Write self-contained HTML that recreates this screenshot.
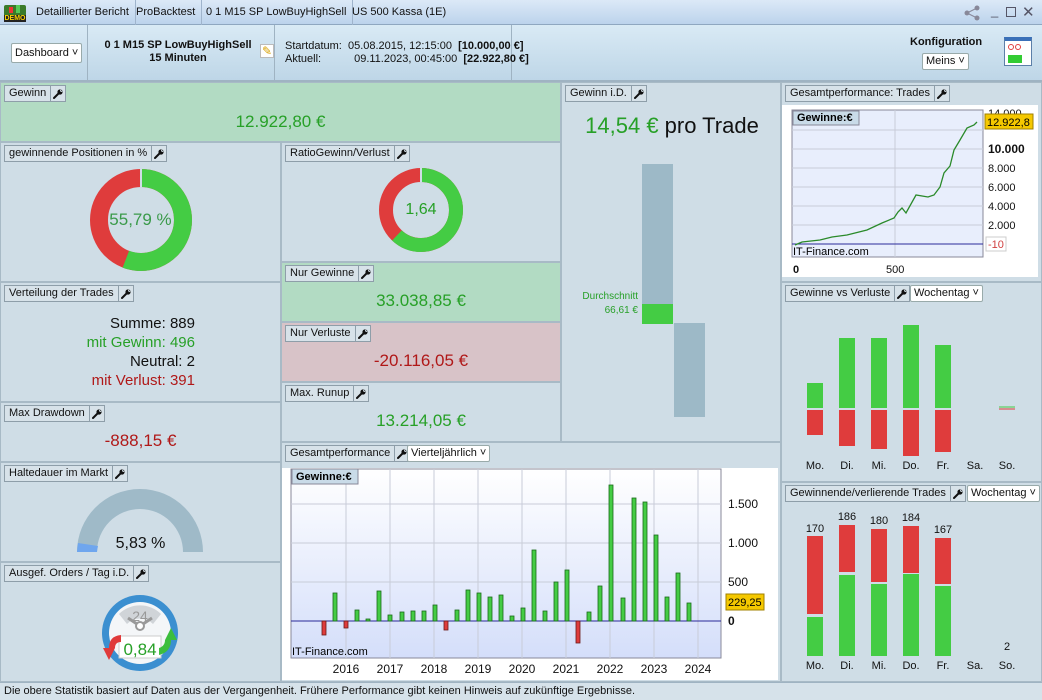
<!DOCTYPE html>
<html><head><meta charset="utf-8"><style>
*{margin:0;padding:0;box-sizing:border-box}
body{width:1042px;height:700px;overflow:hidden;font-family:"Liberation Sans",Arial,sans-serif;font-size:11px;color:#111;background:#cfdde6;position:relative}
.a{position:absolute}
.tb{left:0;top:0;width:1042px;height:25px;background:linear-gradient(#dce9f7,#bcd3ec);border-bottom:1px solid #8fa7c0}
.tab{top:0;height:25px;line-height:25px;padding:0 6px;border-right:1px solid #9fb4cc;font-size:11px}
.hd{left:0;top:25px;width:1042px;height:57px;background:linear-gradient(#d9eaf5,#bed6e7);border-bottom:2px solid #9fb3c2}
.p{border:1px solid #a8bac6;background:#cfdde6}
.lbl{position:absolute;left:3px;top:2px;height:17px;line-height:15px;border:1px solid #8e9ea9;background:#d7e2e9;font-size:11px;white-space:nowrap;display:flex}
.lbl span{padding:0 4px}
.lbl i{border-left:1px solid #8e9ea9;width:15px;display:flex;align-items:center;justify-content:center}
.sel{position:absolute;height:17px;line-height:15px;border:1px solid #9aa;background:#fff;border-radius:2px;padding:0 3px;font-size:11px}
.big{position:absolute;left:0;width:100%;text-align:center;font-size:17px}
.g{color:#27a027}.r{color:#b01818}
</style></head><body>
<svg width="0" height="0" style="position:absolute"><defs><symbol id="w" viewBox="0 0 10 10"><path d="M1 9 L6 4" stroke="#111" stroke-width="2" stroke-linecap="round"/><circle cx="7" cy="3" r="2.6" fill="#111"/><path d="M7.3 0.5 L9.5 2.7 L8 3 L7 2Z" fill="#d7e2e9"/></symbol></defs></svg>
<div class="a tb"></div>
<div class="a" style="left:4px;top:5px;width:22px;height:17px;background:#3a7a2a;border-radius:2px"><div style="position:absolute;left:0;bottom:0;width:22px;height:7px;background:#222;color:#f6d200;font-size:7px;font-weight:bold;line-height:7px;text-align:center">DEMO</div><div style="position:absolute;left:5px;top:2px;width:4px;height:6px;background:#e33"></div><div style="position:absolute;left:12px;top:0;width:4px;height:8px;background:#5c5"></div></div>
<div class="a tab" style="left:30px">Detaillierter Bericht</div>
<div class="a tab" style="left:130px">ProBacktest</div>
<div class="a tab" style="left:200px">0 1 M15 SP LowBuyHighSell</div>
<div class="a tab" style="left:346px;border:none">US 500 Kassa (1E)</div>
<svg class="a" style="left:964px;top:5px" width="18" height="16"><circle cx="3" cy="8" r="2.5" fill="#889"/><circle cx="13" cy="3" r="2.5" fill="#889"/><circle cx="13" cy="13" r="2.5" fill="#889"/><path d="M3 8 L13 3 M3 8 L13 13" stroke="#889"/></svg>
<div class="a" style="left:991px;top:3px;font-size:13px;color:#556">_</div>
<div class="a" style="left:1006px;top:7px;width:10px;height:10px;border:1.5px solid #556"></div>
<div class="a" style="left:1022px;top:3px;font-size:15px;color:#556">&#10005;</div>

<div class="a hd"></div>
<div class="a" style="left:87px;top:25px;width:1px;height:56px;background:#9fb3c2"></div>
<div class="a" style="left:274px;top:25px;width:1px;height:56px;background:#9fb3c2"></div>
<div class="a" style="left:511px;top:25px;width:1px;height:56px;background:#9fb3c2"></div>
<div class="sel" style="left:11px;top:43px;height:20px;line-height:18px">Dashboard &#709;</div>
<div class="a" style="left:100px;top:39px;width:156px;text-align:center;font-weight:bold;font-size:11px;line-height:13px">0 1 M15 SP LowBuyHighSell<br>15 Minuten</div>
<div class="a" style="left:260px;top:44px;width:14px;height:14px;background:#fff;border:1px solid #bbb;color:#d8a000;font-size:12px;line-height:12px;text-align:center">&#9998;</div>
<div class="a" style="left:285px;top:40px;line-height:13px;font-size:11px">Startdatum:&nbsp; 05.08.2015, 12:15:00 &nbsp;<b>[10.000,00 €]</b><br>Aktuell:<span style="display:inline-block;width:33px"></span>09.11.2023, 00:45:00 &nbsp;<b>[22.922,80 €]</b></div>
<div class="a" style="left:910px;top:36px;font-weight:bold;font-size:11px">Konfiguration</div>
<div class="sel" style="left:922px;top:53px">Meins &#709;</div>
<div class="a" style="left:1004px;top:37px;width:28px;height:29px;border:1px solid #5c7fa8;background:#fff;border-top:4px solid #3a70b8"><div style="position:absolute;left:3px;top:3px;width:6px;height:6px;border:1.5px solid #e04040;border-radius:50%"></div><div style="position:absolute;left:10px;top:3px;width:6px;height:6px;border:1.5px solid #e04040;border-radius:50%"></div><div style="position:absolute;left:3px;bottom:2px;width:14px;height:8px;background:#3c3"></div></div>

<!-- col1 -->
<div class="a p" style="left:0;top:82px;width:561px;height:60px;background:#b2dbc3"><div class="lbl"><span>Gewinn</span><i><svg width="10" height="10"><use href="#w"/></svg></i></div><div class="big g" style="top:29px">12.922,80 €</div></div>
<div class="a p" style="left:0;top:142px;width:281px;height:140px"><div class="lbl"><span>gewinnende Positionen in %</span><i><svg width="10" height="10"><use href="#w"/></svg></i></div></div>
<svg class="a" style="left:0;top:142px" width="281" height="140"><circle cx="141" cy="78" r="42" fill="none" stroke="#df3c3c" stroke-width="18"/><circle cx="141" cy="78" r="42" fill="none" stroke="#44cc44" stroke-width="18" stroke-dasharray="147.2 300" transform="rotate(-90 141 78)"/><line x1="141" y1="27" x2="141" y2="45" stroke="#cfdde6" stroke-width="2"/></svg>
<div class="big" style="left:0;width:281px;top:210px;color:#3a9a4a;font-size:17px">55,79 %</div>
<div class="a p" style="left:0;top:282px;width:281px;height:120px"><div class="lbl"><span>Verteilung der Trades</span><i><svg width="10" height="10"><use href="#w"/></svg></i></div>
<div class="a" style="left:0;width:194px;top:31px;text-align:right;font-size:15px;line-height:19px">Summe: 889<br><span class="g">mit Gewinn: 496</span><br>Neutral: 2<br><span class="r">mit Verlust: 391</span></div></div>
<div class="a p" style="left:0;top:402px;width:281px;height:60px"><div class="lbl"><span>Max Drawdown</span><i><svg width="10" height="10"><use href="#w"/></svg></i></div><div class="big r" style="top:28px">-888,15 €</div></div>
<div class="a p" style="left:0;top:462px;width:281px;height:100px"><div class="lbl"><span>Haltedauer im Markt</span><i><svg width="10" height="10"><use href="#w"/></svg></i></div></div>
<svg class="a" style="left:0;top:462px" width="281" height="100"><path d="M77 90 A63 63 0 0 1 203 90 L183 90 A43 43 0 0 0 97 90 Z" fill="#9fbac8"/><path d="M77 90 A63 63 0 0 1 78 81 L98 84 A43 43 0 0 0 97 90 Z" fill="#6fa6ee"/></svg>
<div class="big" style="left:0;width:281px;top:535px;font-size:16px">5,83 %</div>
<div class="a p" style="left:0;top:562px;width:281px;height:120px"><div class="lbl"><span>Ausgef. Orders / Tag i.D.</span><i><svg width="10" height="10"><use href="#w"/></svg></i></div></div>
<svg class="a" style="left:95px;top:590px" width="90" height="90"><circle cx="45" cy="43" r="38" fill="#3b8fd0"/><circle cx="45" cy="43" r="31" fill="#f4f6f8"/><path d="M24 24 A30 30 0 0 1 66 24 L58 34 A18 18 0 0 0 32 34Z" fill="#d0d4d8"/><text x="45" y="31" font-size="14" fill="#999" text-anchor="middle" font-family="Liberation Sans">24</text><line x1="45" y1="36" x2="33" y2="28" stroke="#999" stroke-width="3"/><line x1="45" y1="36" x2="57" y2="28" stroke="#999" stroke-width="3"/><circle cx="45" cy="36" r="4" fill="#fff" stroke="#999" stroke-width="2"/><rect x="24" y="46" width="42" height="22" fill="#fff" stroke="#ccc"/><path d="M8 58 L20 58 L14 70Z M14 58 Q14 46 26 45 L26 52 Q20 52 20 58Z" fill="#e03a3a"/><path d="M70 50 L82 50 L76 38Z M76 50 Q76 62 64 65 L64 58 Q70 56 70 50Z" fill="#3cbe3c"/></svg>
<div class="a g" style="left:95px;width:90px;top:640px;text-align:center;font-size:17px">0,84</div>

<!-- col2 -->
<div class="a p" style="left:281px;top:142px;width:280px;height:120px"><div class="lbl"><span>RatioGewinn/Verlust</span><i><svg width="10" height="10"><use href="#w"/></svg></i></div></div>
<svg class="a" style="left:281px;top:142px" width="280" height="120"><circle cx="140" cy="68" r="35" fill="none" stroke="#df3c3c" stroke-width="14"/><circle cx="140" cy="68" r="35" fill="none" stroke="#44cc44" stroke-width="14" stroke-dasharray="136.3 300" transform="rotate(-90 140 68)"/><line x1="140" y1="26" x2="140" y2="40" stroke="#cfdde6" stroke-width="2"/></svg>
<div class="big g" style="left:281px;width:280px;top:201px;font-size:16px">1,64</div>
<div class="a p" style="left:281px;top:262px;width:280px;height:60px;background:#b2dbc3"><div class="lbl"><span>Nur Gewinne</span><i><svg width="10" height="10"><use href="#w"/></svg></i></div><div class="big g" style="top:28px">33.038,85 €</div></div>
<div class="a p" style="left:281px;top:322px;width:280px;height:60px;background:#d8c3c8"><div class="lbl"><span>Nur Verluste</span><i><svg width="10" height="10"><use href="#w"/></svg></i></div><div class="big r" style="top:28px">-20.116,05 €</div></div>
<div class="a p" style="left:281px;top:382px;width:280px;height:60px"><div class="lbl"><span>Max. Runup</span><i><svg width="10" height="10"><use href="#w"/></svg></i></div><div class="big g" style="top:28px">13.214,05 €</div></div>
<div class="a p" style="left:281px;top:442px;width:500px;height:240px"><div class="lbl"><span>Gesamtperformance</span><i><svg width="10" height="10"><use href="#w"/></svg></i></div><div class="sel" style="left:125px;top:2px">Vierteljährlich &#709;</div></div>
<svg class="a" style="left:282px;top:468px" width="496" height="212" font-family="Liberation Sans" font-size="12">
<defs><linearGradient id="gg" x1="0" y1="0" x2="0" y2="1"><stop offset="0" stop-color="#fff"/><stop offset="1" stop-color="#d4defa"/></linearGradient></defs>
<rect x="0" y="0" width="496" height="212" fill="#fff"/>
<rect x="9" y="1" width="430" height="189" fill="url(#gg)" stroke="#889"/>
<g stroke="#c8ccd8"><line x1="64" y1="1" x2="64" y2="190"/><line x1="108" y1="1" x2="108" y2="190"/><line x1="152" y1="1" x2="152" y2="190"/><line x1="196" y1="1" x2="196" y2="190"/><line x1="240" y1="1" x2="240" y2="190"/><line x1="284" y1="1" x2="284" y2="190"/><line x1="328" y1="1" x2="328" y2="190"/><line x1="372" y1="1" x2="372" y2="190"/><line x1="416" y1="1" x2="416" y2="190"/><line x1="9" y1="36" x2="439" y2="36"/><line x1="9" y1="75" x2="439" y2="75"/><line x1="9" y1="114" x2="439" y2="114"/></g>
<line x1="9" y1="153" x2="439" y2="153" stroke="#2a2a9a"/>
<g stroke="#1a6a1a" stroke-width="0.8" fill="#44cc44">
<rect x="51" y="125" width="4" height="28"/><rect x="73" y="142" width="4" height="11"/><rect x="84" y="151" width="4" height="2"/><rect x="95" y="123" width="4" height="30"/><rect x="106" y="147" width="4" height="6"/><rect x="118" y="144" width="4" height="9"/><rect x="129" y="143" width="4" height="10"/><rect x="140" y="143" width="4" height="10"/><rect x="151" y="137" width="4" height="16"/><rect x="173" y="142" width="4" height="11"/><rect x="184" y="122" width="4" height="31"/><rect x="195" y="125" width="4" height="28"/><rect x="206" y="129" width="4" height="24"/><rect x="217" y="127" width="4" height="26"/><rect x="228" y="148" width="4" height="5"/><rect x="239" y="140" width="4" height="13"/><rect x="250" y="82" width="4" height="71"/><rect x="261" y="143" width="4" height="10"/><rect x="272" y="114" width="4" height="39"/><rect x="283" y="102" width="4" height="51"/><rect x="305" y="144" width="4" height="9"/><rect x="316" y="118" width="4" height="35"/><rect x="327" y="17" width="4" height="136"/><rect x="339" y="130" width="4" height="23"/><rect x="350" y="30" width="4" height="123"/><rect x="361" y="34" width="4" height="119"/><rect x="372" y="67" width="4" height="86"/><rect x="383" y="129" width="4" height="24"/><rect x="394" y="105" width="4" height="48"/><rect x="405" y="135" width="4" height="18"/></g>
<g stroke="#6a1a1a" stroke-width="0.8" fill="#df3c3c"><rect x="40" y="153" width="4" height="14"/><rect x="62" y="153" width="4" height="7"/><rect x="162" y="153" width="4" height="9"/><rect x="294" y="153" width="4" height="22"/></g>
<rect x="10" y="1" width="66" height="15" fill="#c9dbe8" stroke="#889"/><text x="14" y="12" font-weight="bold" font-size="11">Gewinne:€</text>
<text x="10" y="187" font-size="11">IT-Finance.com</text>
<g fill="#111"><text x="446" y="40">1.500</text><text x="446" y="79">1.000</text><text x="446" y="118">500</text><text x="446" y="157" font-weight="bold">0</text></g>
<g fill="#111" text-anchor="middle"><text x="64" y="205">2016</text><text x="108" y="205">2017</text><text x="152" y="205">2018</text><text x="196" y="205">2019</text><text x="240" y="205">2020</text><text x="284" y="205">2021</text><text x="328" y="205">2022</text><text x="372" y="205">2023</text><text x="416" y="205">2024</text></g>
<rect x="444" y="126" width="38" height="16" fill="#f5c800" stroke="#a08000"/><text x="446" y="138" font-size="11">229,25</text>
</svg>

<!-- col3 -->
<div class="a p" style="left:561px;top:82px;width:220px;height:360px"><div class="lbl"><span>Gewinn i.D.</span><i><svg width="10" height="10"><use href="#w"/></svg></i></div>
<div class="a" style="left:0;width:220px;top:30px;text-align:center;font-size:22px"><span class="g">14,54 €</span> pro Trade</div>
<div class="a" style="left:80px;top:81px;width:31px;height:140px;background:#9db9c7"></div>
<div class="a" style="left:80px;top:221px;width:31px;height:20px;background:#44cc44"></div>
<div class="a" style="left:112px;top:240px;width:31px;height:94px;background:#9db9c7"></div>
<div class="a g" style="left:0;width:76px;top:207px;text-align:right;font-size:10px;line-height:14px">Durchschnitt<br>66,61 €</div></div>

<!-- col4 -->
<div class="a p" style="left:781px;top:82px;width:261px;height:200px"><div class="lbl"><span>Gesamtperformance: Trades</span><i><svg width="10" height="10"><use href="#w"/></svg></i></div></div>
<svg class="a" style="left:782px;top:105px" width="256" height="172" font-family="Liberation Sans" font-size="11">
<rect x="0" y="0" width="256" height="172" fill="#fff"/>
<rect x="10" y="5" width="191" height="147" fill="#e8eefc" stroke="#889"/>
<g stroke="#c8ccd8"><line x1="113" y1="5" x2="113" y2="152"/><line x1="10" y1="25" x2="201" y2="25"/><line x1="10" y1="44" x2="201" y2="44"/><line x1="10" y1="63" x2="201" y2="63"/><line x1="10" y1="82" x2="201" y2="82"/><line x1="10" y1="101" x2="201" y2="101"/><line x1="10" y1="120" x2="201" y2="120"/></g>
<line x1="10" y1="139" x2="201" y2="139" stroke="#2a2a9a"/>
<polyline fill="none" stroke="#2a8a2a" stroke-width="1.3" points="13,140 20,137 38,135 50,132 65,130 85,125 100,118 112,113 116,107 120,103 124,108 134,90 146,92 152,90 158,82 162,68 168,61 172,45 178,35 185,23 192,20 195,17"/>
<rect x="11" y="6" width="66" height="14" fill="#c9dbe8" stroke="#889"/><text x="15" y="16" font-weight="bold">Gewinne:€</text>
<text x="11" y="150">IT-Finance.com</text>
<g fill="#111"><text x="206" y="12">14.000</text><text x="206" y="48" font-weight="bold" font-size="12">10.000</text><text x="206" y="67">8.000</text><text x="206" y="86">6.000</text><text x="206" y="105">4.000</text><text x="206" y="124">2.000</text>
<text x="11" y="168" font-weight="bold">0</text><text x="104" y="168">500</text></g>
<rect x="203" y="9" width="48" height="15" fill="#f5c800" stroke="#a08000"/><text x="205" y="21">12.922,8</text>
<rect x="204" y="132" width="20" height="14" fill="#fff" stroke="#ccc"/><text x="206" y="143" fill="#d04040">-10</text>
</svg>
<div class="a p" style="left:781px;top:282px;width:261px;height:200px"><div class="lbl"><span>Gewinne vs Verluste</span><i><svg width="10" height="10"><use href="#w"/></svg></i></div><div class="sel" style="left:128px;top:2px">Wochentag &#709;</div></div>
<div class="a p" style="left:781px;top:482px;width:261px;height:200px"><div class="lbl"><span>Gewinnende/verlierende Trades</span><i><svg width="10" height="10"><use href="#w"/></svg></i></div><div class="sel" style="left:185px;top:2px">Wochentag &#709;</div></div>
<svg class="a" style="left:782px;top:300px" width="258" height="380" font-family="Liberation Sans" font-size="11">
<g fill="#44cc44"><rect x="25" y="83" width="16" height="25"/><rect x="57" y="38" width="16" height="70"/><rect x="89" y="38" width="16" height="70"/><rect x="121" y="25" width="16" height="83"/><rect x="153" y="45" width="16" height="63"/></g>
<g fill="#df3c3c"><rect x="25" y="110" width="16" height="25"/><rect x="57" y="110" width="16" height="36"/><rect x="89" y="110" width="16" height="39"/><rect x="121" y="110" width="16" height="46"/><rect x="153" y="110" width="16" height="42"/></g>
<line x1="217" y1="107" x2="233" y2="107" stroke="#44cc44"/><line x1="217" y1="109" x2="233" y2="109" stroke="#df3c3c"/>
<g fill="#111" text-anchor="middle"><text x="33" y="169">Mo.</text><text x="65" y="169">Di.</text><text x="97" y="169">Mi.</text><text x="129" y="169">Do.</text><text x="161" y="169">Fr.</text><text x="193" y="169">Sa.</text><text x="225" y="169">So.</text></g>
<g fill="#df3c3c"><rect x="25" y="236" width="16" height="78"/><rect x="57" y="225" width="16" height="47"/><rect x="89" y="229" width="16" height="53"/><rect x="121" y="226" width="16" height="47"/><rect x="153" y="238" width="16" height="46"/></g>
<g fill="#44cc44"><rect x="25" y="317" width="16" height="39"/><rect x="57" y="275" width="16" height="81"/><rect x="89" y="284" width="16" height="72"/><rect x="121" y="274" width="16" height="82"/><rect x="153" y="286" width="16" height="70"/></g>
<g fill="#111" text-anchor="middle"><text x="33" y="232">170</text><text x="65" y="220">186</text><text x="97" y="224">180</text><text x="129" y="221">184</text><text x="161" y="233">167</text><text x="225" y="350">2</text>
<text x="33" y="369">Mo.</text><text x="65" y="369">Di.</text><text x="97" y="369">Mi.</text><text x="129" y="369">Do.</text><text x="161" y="369">Fr.</text><text x="193" y="369">Sa.</text><text x="225" y="369">So.</text></g>
</svg>

<div class="a" style="left:0;top:682px;width:1042px;height:18px;background:#d6e2ea;border-top:1px solid #9fb3c2;padding-left:4px;line-height:17px;font-size:11px">Die obere Statistik basiert auf Daten aus der Vergangenheit. Frühere Performance gibt keinen Hinweis auf zukünftige Ergebnisse.</div>
</body></html>
